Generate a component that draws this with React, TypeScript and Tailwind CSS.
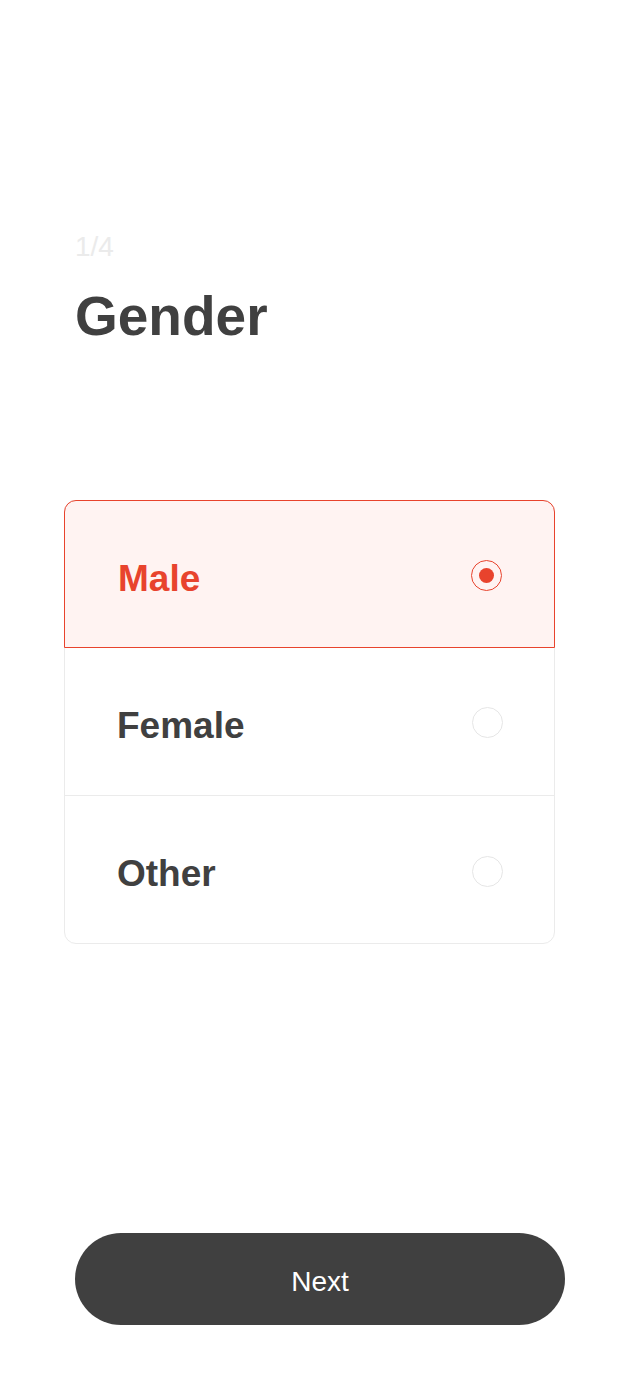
import React from "react";

const options = ["Male", "Female", "Other"];

function Radio({ selected }: { selected: boolean }) {
  if (selected) {
    return (
      <div className="mt-[2px] w-[31px] h-[31px] rounded-full border-[1.5px] border-[#e8432d] flex items-center justify-center">
        <div className="w-[15px] h-[15px] rounded-full bg-[#e8432d]" />
      </div>
    );
  }
  return <div className="mt-[3px] w-[31px] h-[31px] rounded-full border border-[#e6e6e6] bg-white" />;
}

export default function App() {
  const selected = 0;
  return (
    <div
      className="w-[640px] h-[1384px] bg-white flex flex-col"
      style={{ fontFamily: '"Liberation Sans", Arial, sans-serif' }}
    >
      <div className="pt-[232px] px-[75px] flex flex-col gap-[24px]">
        <div className="text-[28px] leading-[30px] text-[#ebebeb]">1/4</div>
        <div className="text-[55px] leading-[60px] font-bold text-[#404040]">Gender</div>
      </div>

      <div className="mt-[154px] ml-[64px] w-[491px] rounded-[12px] border border-[#ebebeb] flex flex-col">
        {options.map((o, i) => {
          const isSel = i === selected;
          return (
            <div
              key={o}
              className={
                isSel
                  ? "h-[148px] -m-px rounded-t-[12px] border border-[#e8432d] bg-[#fff3f2] flex items-center justify-between pl-[53px] pr-[52px]"
                  : i === options.length - 1
                  ? "h-[147px] flex items-center justify-between pl-[52px] pr-[51px]"
                  : "h-[149px] border-b border-[#ebebeb] flex items-center justify-between pl-[52px] pr-[51px]"
              }
            >
              <span
                className={
                  "mt-[9px] text-[37px] leading-[44px] font-bold " +
                  (isSel ? "text-[#e8432d]" : "text-[#404040]")
                }
              >
                {o}
              </span>
              <Radio selected={isSel} />
            </div>
          );
        })}
      </div>

      <div className="flex-1" />

      <div className="px-[75px] pb-[59px]">
        <button className="w-full h-[92px] rounded-full bg-[#404040] text-white text-[28px] pt-[5px] flex items-center justify-center">
          Next
        </button>
      </div>
    </div>
  );
}
